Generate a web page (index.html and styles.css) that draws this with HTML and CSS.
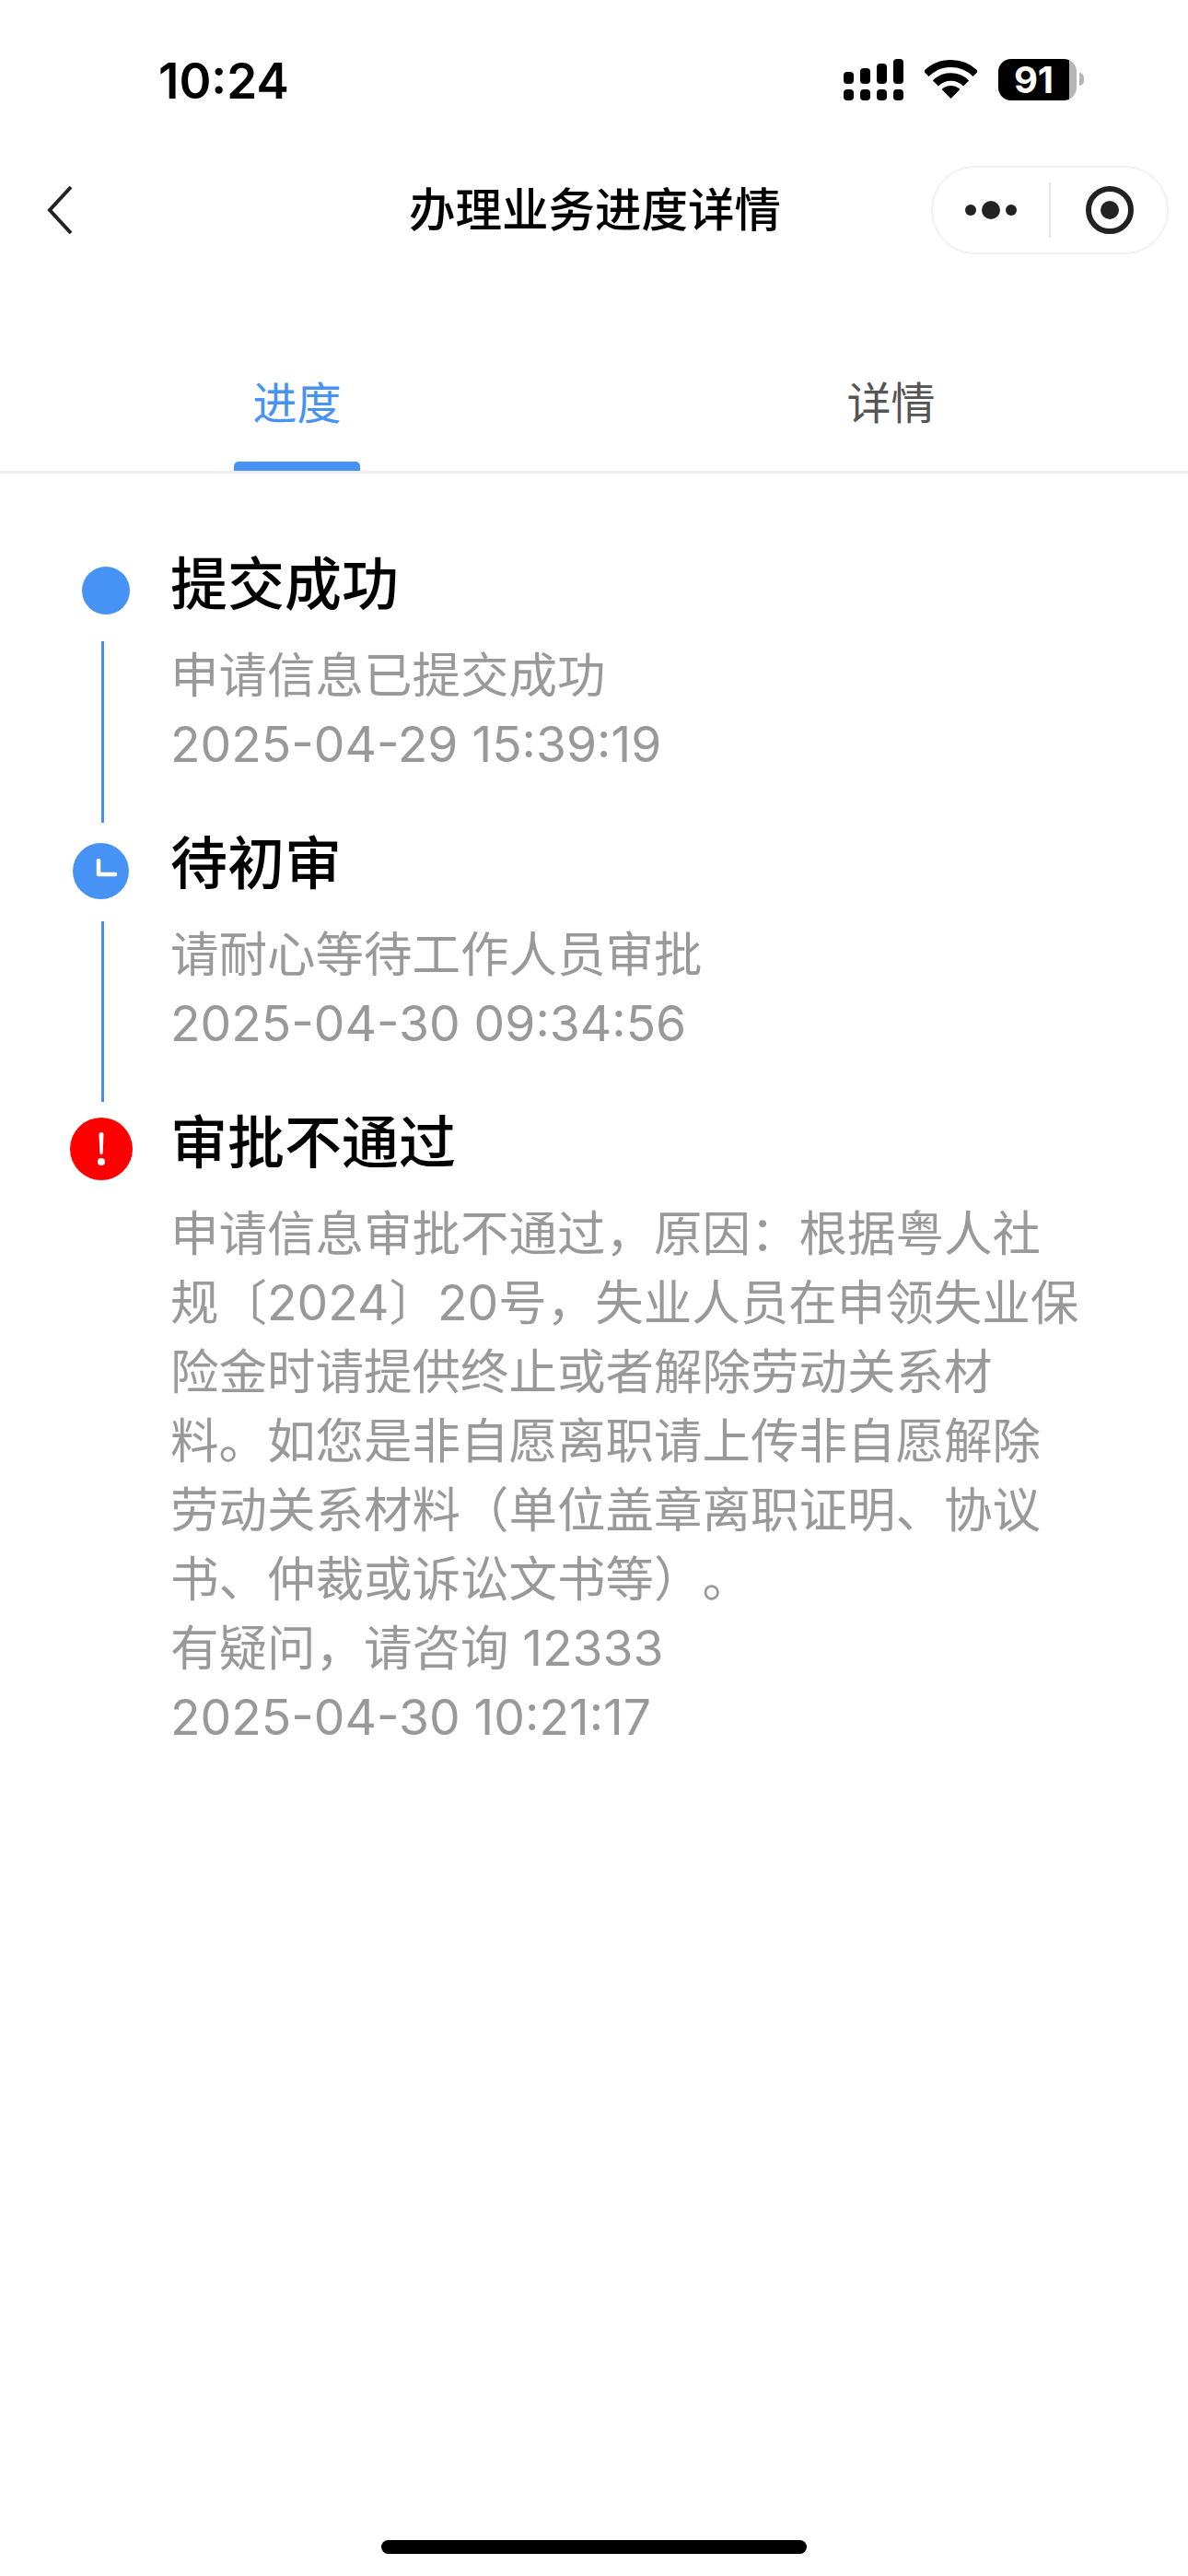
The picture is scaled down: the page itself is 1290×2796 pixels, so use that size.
FILE: index.html
```html
<!DOCTYPE html>
<html lang="zh-CN">
<head>
    <meta charset="UTF-8">
    <meta name="viewport" content="width=device-width, initial-scale=1.0">
    <title>办理业务进度详情</title>
    <link rel="stylesheet" href="styles.css">
</head>
<body>
    <div class="page">
        <!-- Status bar -->
        <div class="status-bar">
            <span class="clock">10:24</span>
            <div class="status-icons">
                <div class="signal">
                    <div class="signal-col"><i class="bar-top bar-1"></i><i class="bar-bottom"></i></div>
                    <div class="signal-col"><i class="bar-top bar-2"></i><i class="bar-bottom"></i></div>
                    <div class="signal-col"><i class="bar-top bar-3"></i><i class="bar-bottom"></i></div>
                    <div class="signal-col"><i class="bar-top bar-4"></i><i class="bar-bottom"></i></div>
                </div>
                <svg class="wifi" width="57" height="42" viewBox="0 0 57 42">
                    <path d="M1.63 15.13A38 38 0 0 1 55.37 15.13" fill="none" stroke="#000" stroke-width="8"/>
                    <path d="M11.9 25.4A23.5 23.5 0 0 1 45.1 25.4" fill="none" stroke="#000" stroke-width="8.5"/>
                    <path d="M28.5 42L18.6 32.1A14 14 0 0 1 38.4 32.1Z" fill="#000"/>
                </svg>
                <div class="battery">91</div>
            </div>
        </div>

        <!-- Nav bar -->
        <div class="nav-bar">
            <svg class="back" width="30" height="54" viewBox="0 0 30 54">
                <path d="M27 2L4 27L27 52" fill="none" stroke="#222" stroke-width="4"/>
            </svg>
            <h1 class="nav-title">办理业务进度详情</h1>
            <div class="capsule">
                <div class="capsule-part">
                    <svg width="60" height="24" viewBox="0 0 60 24">
                        <circle cx="8" cy="12" r="6" fill="#222"/>
                        <circle cx="30" cy="12" r="10" fill="#222"/>
                        <circle cx="52" cy="12" r="6" fill="#222"/>
                    </svg>
                </div>
                <div class="capsule-divider"></div>
                <div class="capsule-part">
                    <svg class="target" width="52" height="52" viewBox="0 0 52 52">
                        <circle cx="26" cy="26" r="23" fill="none" stroke="#222" stroke-width="6"/>
                        <circle cx="26" cy="26" r="10" fill="#222"/>
                    </svg>
                </div>
            </div>
        </div>

        <!-- Tabs -->
        <div class="tabs">
            <div class="tab active">进度</div>
            <div class="tab">详情</div>
        </div>

        <!-- Timeline -->
        <div class="timeline">
            <div class="step">
                <div class="step-mark">
                    <div class="dot dot-plain"></div>
                    <div class="line line-first"></div>
                </div>
                <div class="step-body">
                    <h2 class="step-title">提交成功</h2>
                    <p class="step-text">申请信息已提交成功<br><span class="num">2025-04-29 15:39:19</span></p>
                </div>
            </div>
            <div class="step">
                <div class="step-mark">
                    <div class="dot dot-clock">
                        <svg width="24" height="24" viewBox="0 0 24 24">
                            <path d="M3 2V17H21" fill="none" stroke="#fff" stroke-width="4.5" stroke-linecap="round" stroke-linejoin="round"/>
                        </svg>
                    </div>
                    <div class="line line-second"></div>
                </div>
                <div class="step-body">
                    <h2 class="step-title">待初审</h2>
                    <p class="step-text">请耐心等待工作人员审批<br><span class="num">2025-04-30 09:34:56</span></p>
                </div>
            </div>
            <div class="step">
                <div class="step-mark">
                    <div class="dot dot-alert">
                        <svg width="12" height="36" viewBox="0 0 12 36">
                            <path d="M3.5 2.5A2.5 2.5 0 0 1 8.5 2.5L7.6 22.5A1.6 1.6 0 0 1 4.4 22.5Z" fill="#fff"/>
                            <circle cx="6" cy="32" r="4" fill="#fff"/>
                        </svg>
                    </div>
                </div>
                <div class="step-body">
                    <h2 class="step-title">审批不通过</h2>
                    <p class="step-text">申请信息审批不通过，原因：根据粤人社<br>规〔<span class="num">2024</span>〕<span class="num">20</span>号，失业人员在申领失业保<br>险金时请提供终止或者解除劳动关系材<br>料。如您是非自愿离职请上传非自愿解除<br>劳动关系材料（单位盖章离职证明、协议<br>书、仲裁或诉讼文书等）。<br>有疑问，请咨询 <span class="num">12333</span><br><span class="num">2025-04-30 10:21:17</span></p>
                </div>
            </div>
        </div>

        <div class="home-indicator"></div>
    </div>
</body>
</html>
```

FILE: styles.css
```css
* {
    margin: 0;
    padding: 0;
    box-sizing: border-box;
    font-family: Inter, "Noto Sans CJK SC", sans-serif;
}

body {
    background: #fff;
}

.page {
    width: 1290px;
    height: 2796px;
    display: flex;
    flex-direction: column;
    background: #fff;
    overflow: hidden;
}

/* status bar */
.status-bar {
    height: 180px;
    padding: 64px 121px 0 172px;
    display: flex;
    justify-content: space-between;
    align-items: flex-start;
}

.clock {
    font-size: 53px;
    font-weight: 600;
    line-height: 48px;
    color: #000;
}

.status-icons {
    display: flex;
    align-items: flex-start;
}

.signal {
    display: flex;
    gap: 7px;
}

.signal-col {
    width: 11px;
    height: 45px;
    display: flex;
    flex-direction: column;
    justify-content: flex-end;
    gap: 6px;
}

.signal-col i {
    display: block;
    background: #000;
    border-radius: 4px;
}

.bar-bottom { height: 12px; }
.bar-1 { height: 13px; }
.bar-2 { height: 17px; }
.bar-3 { height: 22px; }
.bar-4 { height: 27px; }

.wifi {
    margin: 1px 23px 0 23px;
}

.battery {
    position: relative;
    width: 85px;
    height: 45px;
    border-radius: 14px;
    background: linear-gradient(90deg, #000 91%, #b5b5b5 91%);
    color: #fff;
    font-size: 40px;
    font-weight: 700;
    line-height: 45px;
    padding-right: 8px;
    text-align: center;
}

.battery::after {
    content: "";
    position: absolute;
    left: 88px;
    top: 15px;
    width: 5px;
    height: 14px;
    border-radius: 0 7px 7px 0;
    background: #b5b5b5;
}

/* nav bar */
.nav-bar {
    height: 96px;
    padding: 0 21px 0 50px;
    display: flex;
    align-items: center;
    position: relative;
}

.nav-title {
    position: absolute;
    left: 0;
    right: 0;
    padding-left: 2px;
    text-align: center;
    font-size: 50.5px;
    font-weight: 500;
    line-height: 96px;
    color: #000;
}

.back {
    position: relative;
}

.capsule {
    position: relative;
    margin-left: auto;
    width: 258px;
    height: 96px;
    border: 2px solid #f1f1f1;
    border-radius: 48px;
    display: flex;
    align-items: center;
}

.capsule-part {
    flex: 1;
    display: flex;
    justify-content: center;
    align-items: center;
}

.capsule-divider {
    width: 2px;
    height: 60px;
    background: #e6e6e6;
}

.target {
    margin-left: 2px;
}

/* tabs */
.tabs {
    margin-top: 116px;
    height: 122px;
    display: flex;
    border-bottom: 3px solid #eee;
}

.tab {
    flex: 1;
    position: relative;
    text-align: center;
    padding-top: 9px;
    font-size: 48px;
    line-height: 74px;
    color: #555;
}

.tab.active {
    color: #4693f5;
}

.tab.active::after {
    content: "";
    position: absolute;
    left: 50%;
    bottom: 0;
    width: 137px;
    height: 10px;
    margin-left: -69px;
    border-radius: 5px 5px 0 0;
    background: #4693f5;
}

/* timeline */
.timeline {
    padding: 86px 0 0 76px;
}

.step {
    display: flex;
    min-height: 303px;
}

.step-mark {
    width: 109px;
    flex-shrink: 0;
    display: flex;
    flex-direction: column;
}

.dot {
    border-radius: 50%;
    display: flex;
    align-items: center;
    justify-content: center;
}

.dot-plain {
    width: 52px;
    height: 52px;
    margin: 15px 0 0 13px;
    background: #4693f5;
}

.dot-clock {
    width: 61px;
    height: 61px;
    margin: 12px 0 0 3px;
    background: #4693f5;
}

.dot-clock svg {
    margin: 0 0 4px 13px;
}

.dot-alert {
    width: 68px;
    height: 68px;
    margin-top: 7px;
    background: #f00;
}

.line {
    width: 3px;
    margin-left: 34px;
    background: #4a8fe8;
    flex: 1;
    margin-bottom: 10px;
}

.line-first { margin-top: 29px; }
.line-second { margin-top: 24px; }

.step-title {
    font-size: 62px;
    font-weight: 500;
    line-height: 70px;
    color: #000;
}

.step-text {
    margin-top: 26px;
    font-size: 52.5px;
    line-height: 75px;
    color: #999;
    white-space: nowrap;
    text-spacing-trim: space-all;
}

.num {
    font-size: 53.4px;
    line-height: 0;
}

/* home indicator */
.home-indicator {
    margin: auto auto 0;
    width: 462px;
    height: 15px;
    margin-bottom: 24px;
    border-radius: 8px;
    background: #000;
}
```
